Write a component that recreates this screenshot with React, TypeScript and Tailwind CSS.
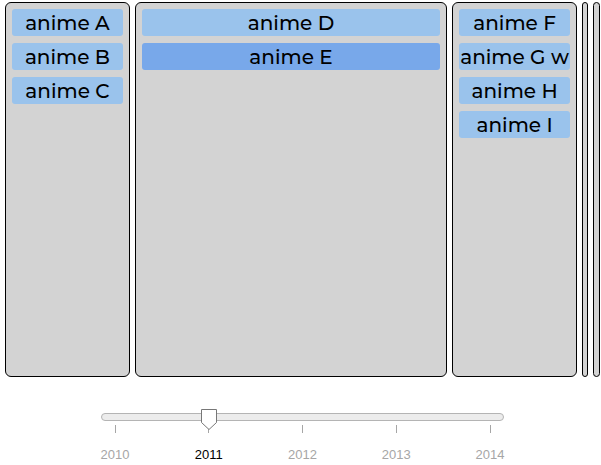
import { useState } from "react";

const years = [2010, 2011, 2012, 2013, 2014];

const columns = [
  { id: "first", items: ["anime A", "anime B", "anime C"] },
  { id: "second", items: ["anime D", "anime E"] },
  { id: "third", items: ["anime F", "anime G w", "anime H", "anime I"] },
  { id: "fourth", items: [] },
  { id: "fifth", items: [] },
];

function Column({ items, selected, onSelect }: {
  items: string[];
  selected: string;
  onSelect: (item: string) => void;
}) {
  return (
    <section
      className={`${items.length ? "rounded-md p-1.5" : "rounded-sm"} flex min-w-0 flex-col gap-[7px] border border-black bg-[#d3d3d3]`}
    >
      {items.map((item) => (
        <button
          key={item}
          type="button"
          onClick={() => onSelect(item)}
          className={`${item === selected ? "bg-[#78a8ea]" : "bg-[#9ac3ec]"} h-[27px] rounded-[3px] text-center font-['Montserrat','Inter',sans-serif] text-[20px] leading-[28px] font-medium whitespace-nowrap text-black`}
        >
          {item}
        </button>
      ))}
    </section>
  );
}

function YearSlider({ year, onChange }: { year: number; onChange: (year: number) => void }) {
  const progress = (year - years[0]) / (years.length - 1);
  return (
    <div className="mx-auto w-full max-w-[403px]">
      <div className="relative h-2">
        <input
          type="range"
          aria-label="Year"
          min={years[0]}
          max={years[years.length - 1]}
          value={year}
          onChange={(event) => onChange(Number(event.target.value))}
          className="block h-2 w-full appearance-none rounded-full border border-[#b4b4b4] bg-[#ececec] outline-none [&::-webkit-slider-thumb]:h-5 [&::-webkit-slider-thumb]:w-7 [&::-webkit-slider-thumb]:appearance-none [&::-webkit-slider-thumb]:opacity-0"
        />
        <div className="pointer-events-none absolute inset-x-3.5 -top-1">
          <svg
            className="relative z-10 -ml-2"
            style={{ left: `${progress * 100}%` }}
            width="16"
            height="21"
            viewBox="0 0 16 21"
            aria-hidden="true"
          >
            <path d="M.5 .5H15.5V13.5L8 20.5L.5 13.5Z" fill="#fff" stroke="#777" />
          </svg>
        </div>
      </div>
      <ol className="mt-1 flex justify-between font-['Liberation_Sans',Arial,sans-serif] text-[13px] leading-4">
        {years.map((value) => (
          <li
            key={value}
            className={`${value === year ? "text-black" : "text-[#a6a6a6]"} flex w-7 flex-col items-center gap-3.5`}
          >
            <span className="h-2 w-px bg-[#a6a6a6]" />
            <span>{value}</span>
          </li>
        ))}
      </ol>
    </div>
  );
}

export default function App() {
  const [selected, setSelected] = useState("anime E");
  const [year, setYear] = useState(2011);
  return (
    <main className="bg-white pt-0.5 pr-px pl-[5px]">
      <div className="grid min-h-[375px] grid-cols-[2fr_5fr_2fr_6px_7px] gap-[5px]">
        {columns.map((column) => (
          <Column
            key={column.id}
            items={column.items}
            selected={selected}
            onSelect={setSelected}
          />
        ))}
      </div>
      <div className="pt-9">
        <YearSlider year={year} onChange={setYear} />
      </div>
    </main>
  );
}
